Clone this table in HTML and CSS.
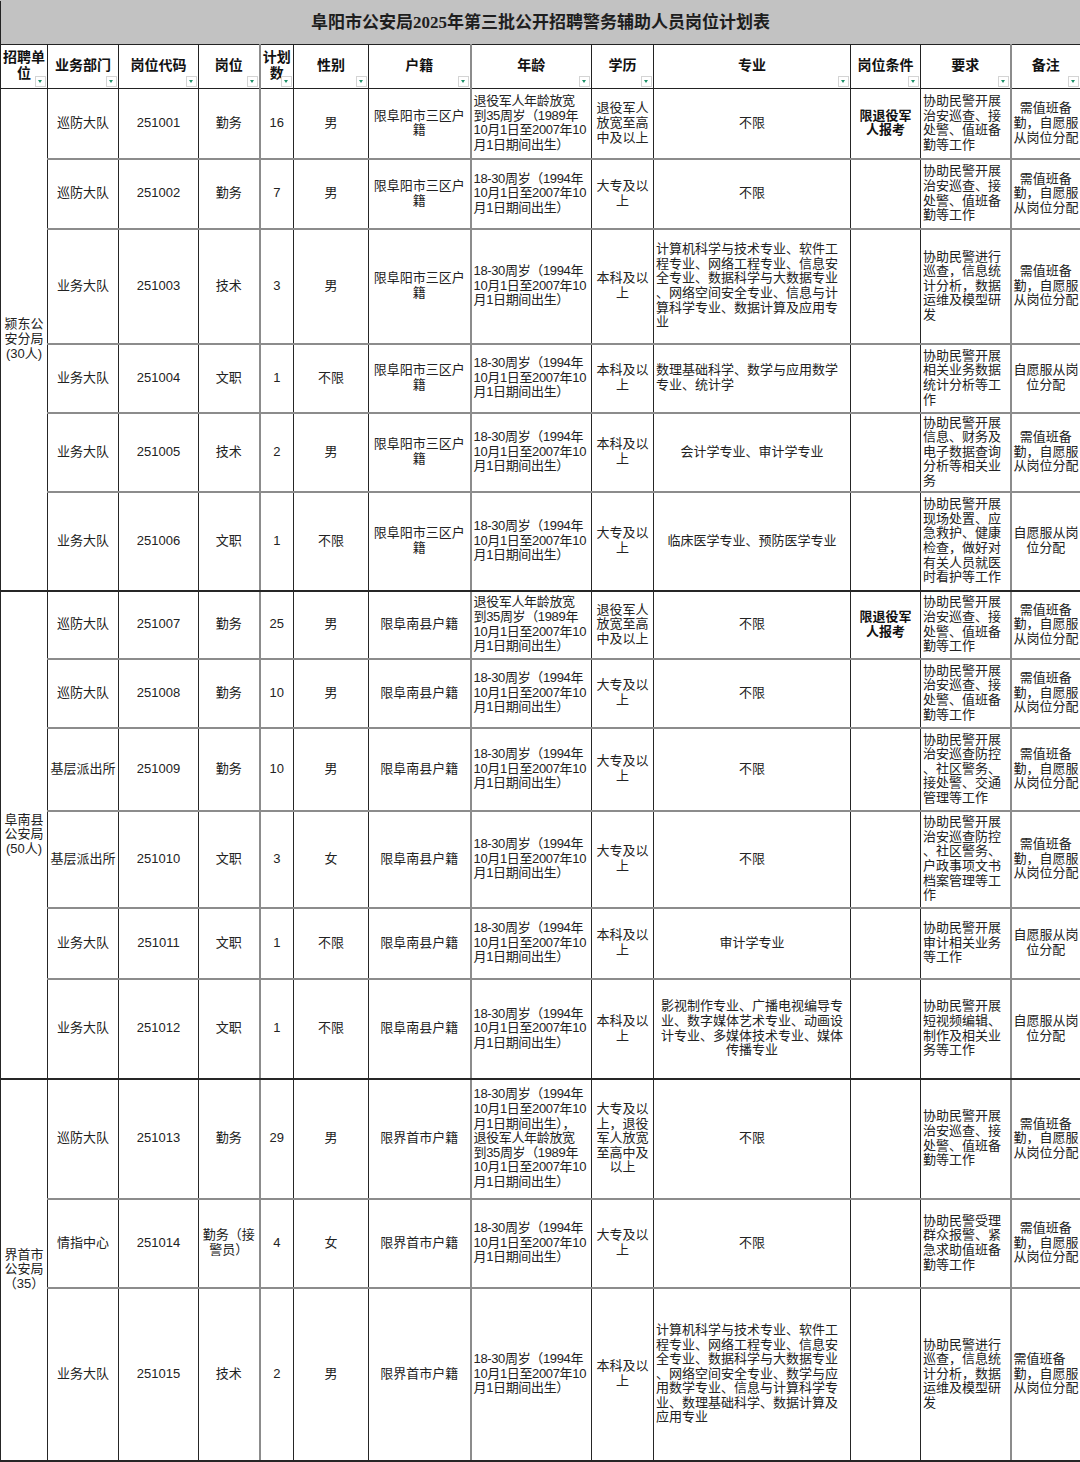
FILE: index.html
```html
<!DOCTYPE html>
<html lang="zh-CN">
<head>
<meta charset="utf-8">
<title>阜阳市公安局2025年第三批公开招聘警务辅助人员岗位计划表</title>
<link rel="stylesheet" href="styles.css">
</head>
<body>
<table class="sheet">
<colgroup>
<col class="w47"><col class="w71"><col class="w80"><col class="w61"><col class="w34"><col class="w75"><col class="w102"><col class="w121"><col class="w62"><col class="w197"><col class="w70"><col class="w90"><col class="w70">
</colgroup>
<thead>
<tr class="title-row"><th colspan="13" class="title-cell">阜阳市公安局2025年第三批公开招聘警务辅助人员岗位计划表</th></tr>
<tr class="head">
<th>招聘单<br>位<span class="flt"></span></th>
<th>业务部门<span class="flt"></span></th>
<th>岗位代码<span class="flt"></span></th>
<th>岗位<span class="flt"></span></th>
<th class="c5">计划<br>数<span class="flt"></span></th>
<th>性别<span class="flt"></span></th>
<th>户籍<span class="flt"></span></th>
<th class="c8">年龄<span class="flt"></span></th>
<th>学历<span class="flt"></span></th>
<th>专业<span class="flt"></span></th>
<th>岗位条件<span class="flt"></span></th>
<th>要求<span class="flt"></span></th>
<th class="c13">备注<span class="flt"></span></th>
</tr>
</thead>
<tbody>
<!-- 颍东 -->
<tr class="r1">
<td rowspan="6" class="unit gend-cell">颍东公<br>安分局<br>(30人)</td>
<td>巡防大队</td><td>251001</td><td>勤务</td><td class="c5">16</td><td>男</td><td>限阜阳市三区户<br>籍</td>
<td class="l c8 age">退役军人年龄放宽<br>到35周岁（1989年<br>10月1日至2007年10<br>月1日期间出生）</td>
<td>退役军人<br>放宽至高<br>中及以上</td><td>不限</td><td class="b">限退役军<br>人报考</td>
<td class="l">协助民警开展<br>治安巡查、接<br>处警、值班备<br>勤等工作</td>
<td class="c13">需值班备<br>勤，自愿服<br>从岗位分配</td>
</tr>
<tr class="r2">
<td>巡防大队</td><td>251002</td><td>勤务</td><td class="c5">7</td><td>男</td><td>限阜阳市三区户<br>籍</td>
<td class="l c8 age">18-30周岁（1994年<br>10月1日至2007年10<br>月1日期间出生）</td>
<td>大专及以<br>上</td><td>不限</td><td></td>
<td class="l">协助民警开展<br>治安巡查、接<br>处警、值班备<br>勤等工作</td>
<td class="c13">需值班备<br>勤，自愿服<br>从岗位分配</td>
</tr>
<tr class="r3">
<td>业务大队</td><td>251003</td><td>技术</td><td class="c5">3</td><td>男</td><td>限阜阳市三区户<br>籍</td>
<td class="l c8 age">18-30周岁（1994年<br>10月1日至2007年10<br>月1日期间出生）</td>
<td>本科及以<br>上</td>
<td class="l">计算机科学与技术专业、软件工<br>程专业、网络工程专业、信息安<br>全专业、数据科学与大数据专业<br>、网络空间安全专业、信息与计<br>算科学专业、数据计算及应用专<br>业</td><td></td>
<td class="l">协助民警进行<br>巡查，信息统<br>计分析，数据<br>运维及模型研<br>发</td>
<td class="c13">需值班备<br>勤，自愿服<br>从岗位分配</td>
</tr>
<tr class="r4">
<td>业务大队</td><td>251004</td><td>文职</td><td class="c5">1</td><td>不限</td><td>限阜阳市三区户<br>籍</td>
<td class="l c8 age">18-30周岁（1994年<br>10月1日至2007年10<br>月1日期间出生）</td>
<td>本科及以<br>上</td>
<td class="l">数理基础科学、数学与应用数学<br>专业、统计学</td><td></td>
<td class="l">协助民警开展<br>相关业务数据<br>统计分析等工<br>作</td>
<td class="c13">自愿服从岗<br>位分配</td>
</tr>
<tr class="r5">
<td>业务大队</td><td>251005</td><td>技术</td><td class="c5">2</td><td>男</td><td>限阜阳市三区户<br>籍</td>
<td class="l c8 age">18-30周岁（1994年<br>10月1日至2007年10<br>月1日期间出生）</td>
<td>本科及以<br>上</td>
<td>会计学专业、审计学专业</td><td></td>
<td class="l">协助民警开展<br>信息、财务及<br>电子数据查询<br>分析等相关业<br>务</td>
<td class="c13">需值班备<br>勤，自愿服<br>从岗位分配</td>
</tr>
<tr class="r6 gend">
<td>业务大队</td><td>251006</td><td>文职</td><td class="c5">1</td><td>不限</td><td>限阜阳市三区户<br>籍</td>
<td class="l c8 age">18-30周岁（1994年<br>10月1日至2007年10<br>月1日期间出生）</td>
<td>大专及以<br>上</td>
<td>临床医学专业、预防医学专业</td><td></td>
<td class="l">协助民警开展<br>现场处置、应<br>急救护、健康<br>检查，做好对<br>有关人员就医<br>时看护等工作</td>
<td class="c13">自愿服从岗<br>位分配</td>
</tr>
<!-- 阜南 -->
<tr class="r7">
<td rowspan="6" class="unit gend-cell">阜南县<br>公安局<br>(50人)</td>
<td>巡防大队</td><td>251007</td><td>勤务</td><td class="c5">25</td><td>男</td><td>限阜南县户籍</td>
<td class="l c8 age">退役军人年龄放宽<br>到35周岁（1989年<br>10月1日至2007年10<br>月1日期间出生）</td>
<td>退役军人<br>放宽至高<br>中及以上</td><td>不限</td><td class="b">限退役军<br>人报考</td>
<td class="l">协助民警开展<br>治安巡查、接<br>处警、值班备<br>勤等工作</td>
<td class="c13">需值班备<br>勤，自愿服<br>从岗位分配</td>
</tr>
<tr class="r8">
<td>巡防大队</td><td>251008</td><td>勤务</td><td class="c5">10</td><td>男</td><td>限阜南县户籍</td>
<td class="l c8 age">18-30周岁（1994年<br>10月1日至2007年10<br>月1日期间出生）</td>
<td>大专及以<br>上</td><td>不限</td><td></td>
<td class="l">协助民警开展<br>治安巡查、接<br>处警、值班备<br>勤等工作</td>
<td class="c13">需值班备<br>勤，自愿服<br>从岗位分配</td>
</tr>
<tr class="r9">
<td>基层派出所</td><td>251009</td><td>勤务</td><td class="c5">10</td><td>男</td><td>限阜南县户籍</td>
<td class="l c8 age">18-30周岁（1994年<br>10月1日至2007年10<br>月1日期间出生）</td>
<td>大专及以<br>上</td><td>不限</td><td></td>
<td class="l">协助民警开展<br>治安巡查防控<br>、社区警务、<br>接处警、交通<br>管理等工作</td>
<td class="c13">需值班备<br>勤，自愿服<br>从岗位分配</td>
</tr>
<tr class="r10">
<td>基层派出所</td><td>251010</td><td>文职</td><td class="c5">3</td><td>女</td><td>限阜南县户籍</td>
<td class="l c8 age">18-30周岁（1994年<br>10月1日至2007年10<br>月1日期间出生）</td>
<td>大专及以<br>上</td><td>不限</td><td></td>
<td class="l">协助民警开展<br>治安巡查防控<br>、社区警务、<br>户政事项文书<br>档案管理等工<br>作</td>
<td class="c13">需值班备<br>勤，自愿服<br>从岗位分配</td>
</tr>
<tr class="r11">
<td>业务大队</td><td>251011</td><td>文职</td><td class="c5">1</td><td>不限</td><td>限阜南县户籍</td>
<td class="l c8 age">18-30周岁（1994年<br>10月1日至2007年10<br>月1日期间出生）</td>
<td>本科及以<br>上</td><td>审计学专业</td><td></td>
<td class="l">协助民警开展<br>审计相关业务<br>等工作</td>
<td class="c13">自愿服从岗<br>位分配</td>
</tr>
<tr class="r12 gend">
<td>业务大队</td><td>251012</td><td>文职</td><td class="c5">1</td><td>不限</td><td>限阜南县户籍</td>
<td class="l c8 age">18-30周岁（1994年<br>10月1日至2007年10<br>月1日期间出生）</td>
<td>本科及以<br>上</td>
<td>影视制作专业、广播电视编导专<br>业、数字媒体艺术专业、动画设<br>计专业、多媒体技术专业、媒体<br>传播专业</td><td></td>
<td class="l">协助民警开展<br>短视频编辑、<br>制作及相关业<br>务等工作</td>
<td class="c13">自愿服从岗<br>位分配</td>
</tr>
<!-- 界首 -->
<tr class="r13">
<td rowspan="3" class="unit gend-cell">界首市<br>公安局<br>（35）</td>
<td>巡防大队</td><td>251013</td><td>勤务</td><td class="c5">29</td><td>男</td><td>限界首市户籍</td>
<td class="l c8 age">18-30周岁（1994年<br>10月1日至2007年10<br>月1日期间出生），<br>退役军人年龄放宽<br>到35周岁（1989年<br>10月1日至2007年10<br>月1日期间出生）</td>
<td>大专及以<br>上，退役<br>军人放宽<br>至高中及<br>以上</td><td>不限</td><td></td>
<td class="l">协助民警开展<br>治安巡查、接<br>处警、值班备<br>勤等工作</td>
<td class="c13">需值班备<br>勤，自愿服<br>从岗位分配</td>
</tr>
<tr class="r14">
<td>情指中心</td><td>251014</td><td>勤务（接<br>警员）</td><td class="c5">4</td><td>女</td><td>限界首市户籍</td>
<td class="l c8 age">18-30周岁（1994年<br>10月1日至2007年10<br>月1日期间出生）</td>
<td>大专及以<br>上</td><td>不限</td><td></td>
<td class="l">协助民警受理<br>群众报警、紧<br>急求助值班备<br>勤等工作</td>
<td class="c13">需值班备<br>勤，自愿服<br>从岗位分配</td>
</tr>
<tr class="r15 gend">
<td>业务大队</td><td>251015</td><td>技术</td><td class="c5">2</td><td>男</td><td>限界首市户籍</td>
<td class="l c8 age">18-30周岁（1994年<br>10月1日至2007年10<br>月1日期间出生）</td>
<td>本科及以<br>上</td>
<td class="l">计算机科学与技术专业、软件工<br>程专业、网络工程专业、信息安<br>全专业、数据科学与大数据专业<br>、网络空间安全专业、数学与应<br>用数学专业、信息与计算科学专<br>业、数理基础科学、数据计算及<br>应用专业</td><td></td>
<td class="l">协助民警进行<br>巡查，信息统<br>计分析，数据<br>运维及模型研<br>发</td>
<td class="c13 l">需值班备<br>勤，自愿服<br>从岗位分配</td>
</tr>
</tbody>
</table>
</body>
</html>
```
FILE: styles.css
```css
html, body {
  margin: 0;
  padding: 0;
  background: #ffffff;
}
body {
  font-family: "Liberation Sans", "Noto Sans CJK SC", sans-serif;
  color: #222;
}
.sheet {
  width: 1080px;
  border-collapse: collapse;
  table-layout: fixed;
}
.w47 { width: 47px; }
.w71 { width: 71px; }
.w80 { width: 80px; }
.w61 { width: 61px; }
.w34 { width: 34px; }
.w75 { width: 75px; }
.w102 { width: 102px; }
.w121 { width: 121px; }
.w62 { width: 62px; }
.w197 { width: 197px; }
.w70 { width: 70px; }
.w90 { width: 90px; }

.title-row { height: 44px; }
.title-cell {
  background: #c2c2c2;
  font-family: "Liberation Serif", "Noto Sans CJK SC", serif;
  font-weight: 700;
  font-size: 17px;
  line-height: 20px;
  color: #1e1e1e;
  text-align: center;
  vertical-align: middle;
  padding: 0;
  border: 1px solid #222;
  border-top-color: #c2c2c2;
}

.head { height: 44px; }
.head th {
  position: relative;
  font-size: 14px;
  font-weight: 700;
  line-height: 16px;
  color: #111;
  text-align: center;
  vertical-align: middle;
  padding: 0 2px 4px;
  border: 1px solid #222;
  white-space: nowrap;
}
.flt {
  position: absolute;
  right: 1px;
  bottom: 1px;
  width: 9px;
  height: 9px;
  background: #fff;
  border: 1px solid #d4d4d4;
}
.flt::after {
  content: "";
  position: absolute;
  left: 2px;
  top: 3px;
  border-left: 2.5px solid transparent;
  border-right: 2.5px solid transparent;
  border-top: 3px solid #1f9068;
}

tbody td {
  font-size: 13px;
  line-height: 14.6px;
  text-align: center;
  vertical-align: middle;
  padding: 0 2px;
  white-space: nowrap;
  border: 1px solid #262626;
  border-bottom: 2px solid #8c8c8c;
  color: #222;
}
tbody td.l { text-align: left; }
tbody td.b { font-weight: 700; color: #111; }
tbody td.age { letter-spacing: -0.35px; }
tbody td.unit { padding: 0 1px; }
tbody tr.gend td, tbody td.gend-cell { border-bottom-color: #262626; }

.sheet .c5 { border-left: 2px solid #8c8c8c; }
.sheet .c8 { border-left: 2px solid #8c8c8c; }
.sheet .c13 { border-left: 2px solid #8c8c8c; }

.r1 { height: 70px; }
.r2 { height: 70px; }
.r3 { height: 115px; }
.r4 { height: 69px; }
.r5 { height: 79px; }
.r6 { height: 99px; }
.r7 { height: 68px; }
.r8 { height: 69px; }
.r9 { height: 83px; }
.r10 { height: 97px; }
.r11 { height: 71px; }
.r12 { height: 100px; }
.r13 { height: 120px; }
.r14 { height: 89px; }
.r15 { height: 173px; }
```
